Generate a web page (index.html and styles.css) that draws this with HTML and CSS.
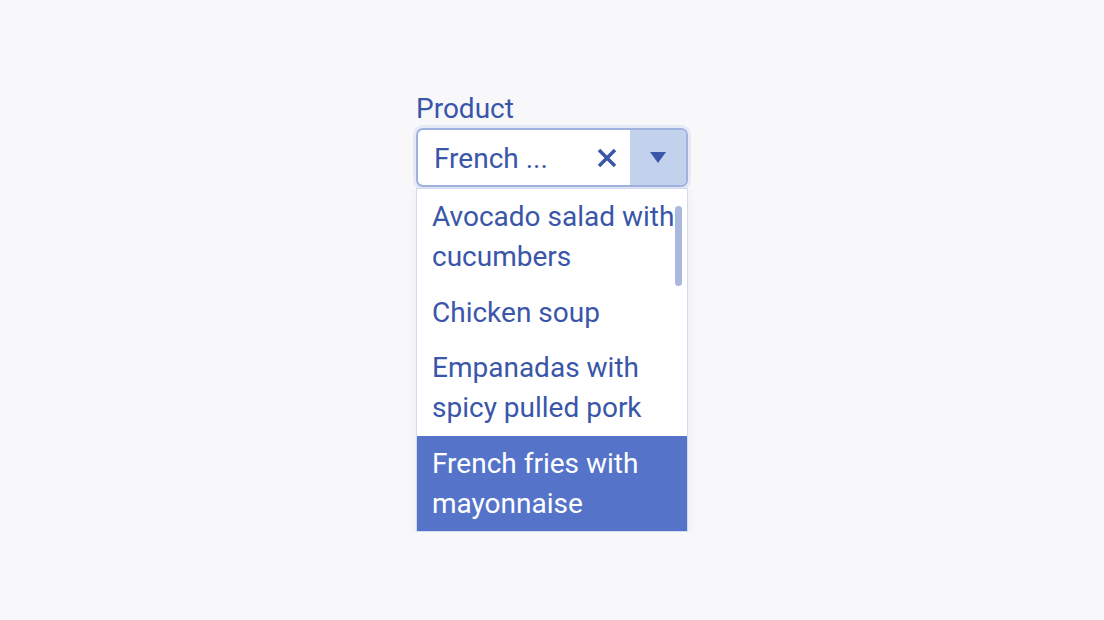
FILE: index.html
```html
<!DOCTYPE html>
<html lang="en">
<head>
    <meta charset="UTF-8">
    <title>Product combo box</title>
    <link rel="stylesheet" href="styles.css">
</head>
<body>
    <div class="page">
        <div class="field">
            <label class="field-label" for="product">Product</label>
            <div class="combo">
                <input id="product" class="combo-input" value="French ..." readonly>
                <button class="combo-clear" aria-label="Clear">
                    <svg width="20" height="20" viewBox="0 0 20 20">
                        <path d="M2 2 L18 18 M18 2 L2 18" stroke="currentColor" stroke-width="3.5" stroke-linecap="butt"/>
                    </svg>
                </button>
                <button class="combo-toggle" aria-label="Open">
                    <svg width="16" height="12" viewBox="0 0 16 12">
                        <path d="M0 1 L16 1 L8 12 Z" fill="currentColor"/>
                    </svg>
                </button>
            </div>
            <div class="listbox">
                <ul class="options">
                    <li class="option">Avocado salad with cucumbers</li>
                    <li class="option">Chicken soup</li>
                    <li class="option">Empanadas with spicy pulled pork</li>
                    <li class="option selected">French fries with mayonnaise</li>
                </ul>
                <div class="scroll-thumb"></div>
            </div>
        </div>
    </div>
</body>
</html>
```

FILE: styles.css
```css
body {
    margin: 0;
    background-color: #f8f8fb;
    font-family: Roboto, "Liberation Sans", sans-serif;
    color: #3a56a9;
}

.page {
    display: flex;
    justify-content: center;
    padding-top: 92px;
}

.field {
    width: 272px;
    display: flex;
    flex-direction: column;
}

.field-label {
    font-size: 28px;
    line-height: 34px;
    margin-bottom: 2px;
    color: #3a56a9;
}

.combo {
    display: flex;
    height: 55px;
    border: 2px solid #9fb1de;
    border-radius: 7px;
    background-color: white;
    box-shadow: 0 0 0 3px #e6e9f6;
    overflow: hidden;
}

.combo-input {
    flex: 1;
    min-width: 0;
    border: none;
    outline: none;
    padding: 2px 0 0 16px;
    font-family: inherit;
    font-size: 28px;
    color: #3a56a9;
    background: transparent;
}

.combo-clear {
    width: 46px;
    border: none;
    background: transparent;
    color: #3a56a9;
    display: flex;
    align-items: center;
    justify-content: center;
    padding: 0;
}

.combo-toggle {
    width: 56px;
    border: none;
    background-color: #c2d1ec;
    color: #3a56a9;
    display: flex;
    align-items: center;
    justify-content: center;
    padding: 0 0 2px 0;
}

.listbox {
    position: relative;
    margin-top: 1px;
    height: 342px;
    overflow: hidden;
    border: 1px solid #d3dbf0;
    background-color: white;
    box-shadow: 0 3px 8px rgba(60, 80, 150, 0.08);
}

.options {
    list-style: none;
    margin: 0;
    padding: 0;
}

.option {
    padding: 8px 10px 7.6px 15px;
    font-size: 28px;
    line-height: 40px;
    color: #3a56a9;
}

.option.selected {
    background-color: #5574c9;
    color: white;
}

.scroll-thumb {
    position: absolute;
    top: 17px;
    right: 5px;
    width: 7px;
    height: 80px;
    border-radius: 4px;
    background-color: #aab8e0;
}
```
